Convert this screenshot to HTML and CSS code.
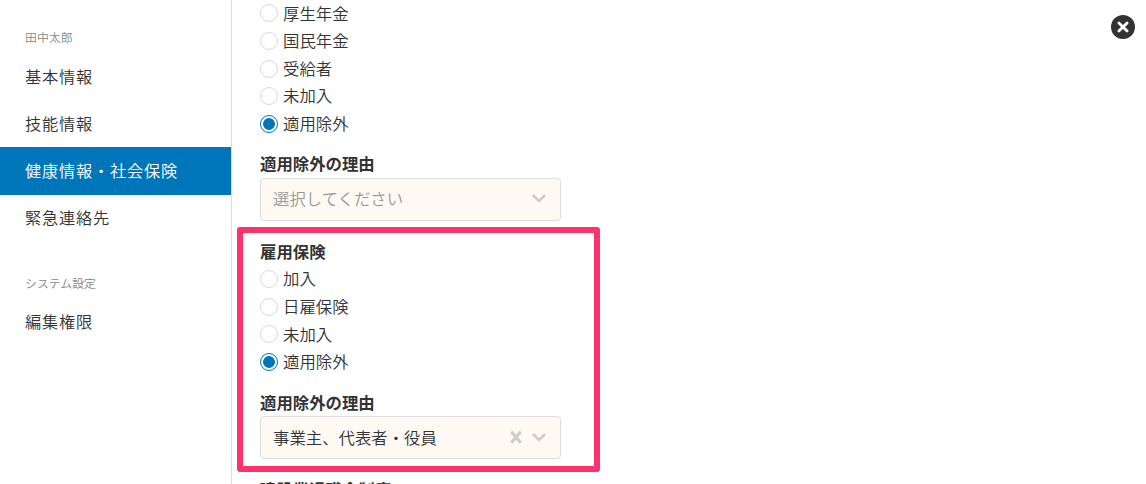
FILE: index.html
```html
<!DOCTYPE html>
<html lang="ja">

<head>
    <meta charset="UTF-8">
    <meta name="viewport" content="width=device-width, initial-scale=1.0">
    <title>健康情報・社会保険</title>
    <link rel="stylesheet" href="styles.css">
</head>

<body>
    <div class="page">
        <nav class="sidebar">
            <p class="sidebar-title">田中太郎</p>
            <a class="sidebar-item">基本情報</a>
            <a class="sidebar-item">技能情報</a>
            <a class="sidebar-item active">健康情報・社会保険</a>
            <a class="sidebar-item">緊急連絡先</a>
            <p class="sidebar-title system">システム設定</p>
            <a class="sidebar-item">編集権限</a>
        </nav>
        <main class="content">
            <section class="field">
                <label class="radio"><input type="radio" name="pension">厚生年金</label>
                <label class="radio"><input type="radio" name="pension">国民年金</label>
                <label class="radio"><input type="radio" name="pension">受給者</label>
                <label class="radio"><input type="radio" name="pension">未加入</label>
                <label class="radio"><input type="radio" name="pension" checked>適用除外</label>
            </section>
            <section class="field reason">
                <h3 class="field-title">適用除外の理由</h3>
                <div class="select">
                    <span class="select-value placeholder">選択してください</span>
                    <svg class="icon" width="16" height="16" viewBox="0 0 16 16">
                        <path d="M1.9 5 8 11l6.1-6" />
                    </svg>
                </div>
            </section>
            <div class="highlight-area">
                <section class="field">
                    <h3 class="field-title">雇用保険</h3>
                    <label class="radio"><input type="radio" name="employment">加入</label>
                    <label class="radio"><input type="radio" name="employment">日雇保険</label>
                    <label class="radio"><input type="radio" name="employment">未加入</label>
                    <label class="radio"><input type="radio" name="employment" checked>適用除外</label>
                </section>
                <section class="field reason">
                    <h3 class="field-title">適用除外の理由</h3>
                    <div class="select">
                        <span class="select-value">事業主、代表者・役員</span>
                        <svg class="icon clear" width="16" height="16" viewBox="0 0 16 16">
                            <path d="M3.3 2.7l9.4 11M12.7 2.7l-9.4 11" />
                        </svg>
                        <svg class="icon" width="16" height="16" viewBox="0 0 16 16">
                            <path d="M1.9 5 8 11l6.1-6" />
                        </svg>
                    </div>
                </section>
                <div class="highlight"></div>
            </div>
            <section class="field">
                <h3 class="field-title">建設業退職金制度</h3>
            </section>
        </main>
        <button class="close" aria-label="閉じる">
            <svg width="24" height="24" viewBox="0 0 24 24">
                <circle cx="12" cy="12" r="12" />
                <path d="M7.9 7.9l8.2 8.2M16.1 7.9l-8.2 8.2" />
            </svg>
        </button>
    </div>
</body>

</html>
```
FILE: styles.css
```css
* {
    box-sizing: border-box;
}

body {
    margin: 0;
    font-family: "Noto Sans CJK JP", sans-serif;
    font-size: 16.4px;
    font-weight: 350;
    color: #333;
    background: #fff;
}

.page {
    display: flex;
    height: 484px;
    overflow: hidden;
}

/* Sidebar */
.sidebar {
    width: 232px;
    flex-shrink: 0;
    padding-top: 22px;
    border-right: 1px solid #ddd;
}

.sidebar-title {
    margin: 0;
    padding-left: 25px;
    height: 31px;
    line-height: 29px;
    font-size: 11.9px;
    color: #888;
}

.sidebar-title.system {
    margin-top: 26px;
    line-height: 31px;
}

.sidebar-item {
    display: block;
    height: 47.1px;
    padding-left: 25px;
    line-height: 46px;
    font-size: 16.2px;
    letter-spacing: 0.8px;
}

.sidebar-item.active {
    height: 47.4px;
    margin-bottom: -0.4px;
    color: #fff;
    background: #0076ba;
}

/* Form */
.content {
    flex: 1;
    margin-top: -0.4px;
    padding-left: 28px;
}

.radio {
    display: flex;
    align-items: center;
    gap: 5px;
    height: 27.6px;
    line-height: 27.6px;
}

.radio input {
    appearance: none;
    width: 18px;
    height: 18px;
    margin: 0;
    border: 1px solid #d9d9d9;
    border-radius: 50%;
    background: #fff;
}

.radio input:checked {
    border-color: #0076ba;
    background: radial-gradient(circle, #0076ba 5.5px, transparent 6.2px);
}

.field-title {
    margin: 0;
    height: 27.6px;
    line-height: 26px;
    font-size: 16.4px;
    font-weight: bold;
}

.reason {
    margin-top: 12.8px;
    margin-bottom: 17.3px;
}

.select {
    display: flex;
    align-items: center;
    width: 301px;
    height: 42.6px;
    padding: 0 13px 2px 12px;
    border: 1px solid #ddd;
    border-radius: 4px;
    background: #fff9f3;
}

.select-value {
    flex: 1;
}

.placeholder {
    color: #999;
}

.icon {
    fill: none;
    stroke: #ccc;
    stroke-width: 2.6;
}

.icon.clear {
    margin-right: 7.5px;
    stroke-width: 3;
}

.highlight-area {
    position: relative;
}

/* frame drawn over the employment insurance block */
.highlight {
    position: absolute;
    top: -11px;
    left: -23px;
    width: 363px;
    height: 245px;
    border: 6px solid #ff336c;
    border-radius: 3px;
    pointer-events: none;
}

.close {
    position: absolute;
    top: 15px;
    right: 11px;
    width: 24px;
    height: 24px;
    padding: 0;
    border: 0;
    background: none;
}

.close svg {
    display: block;
    fill: #333;
}

.close path {
    stroke: #fff;
    stroke-width: 2.8;
    stroke-linecap: round;
}
```
